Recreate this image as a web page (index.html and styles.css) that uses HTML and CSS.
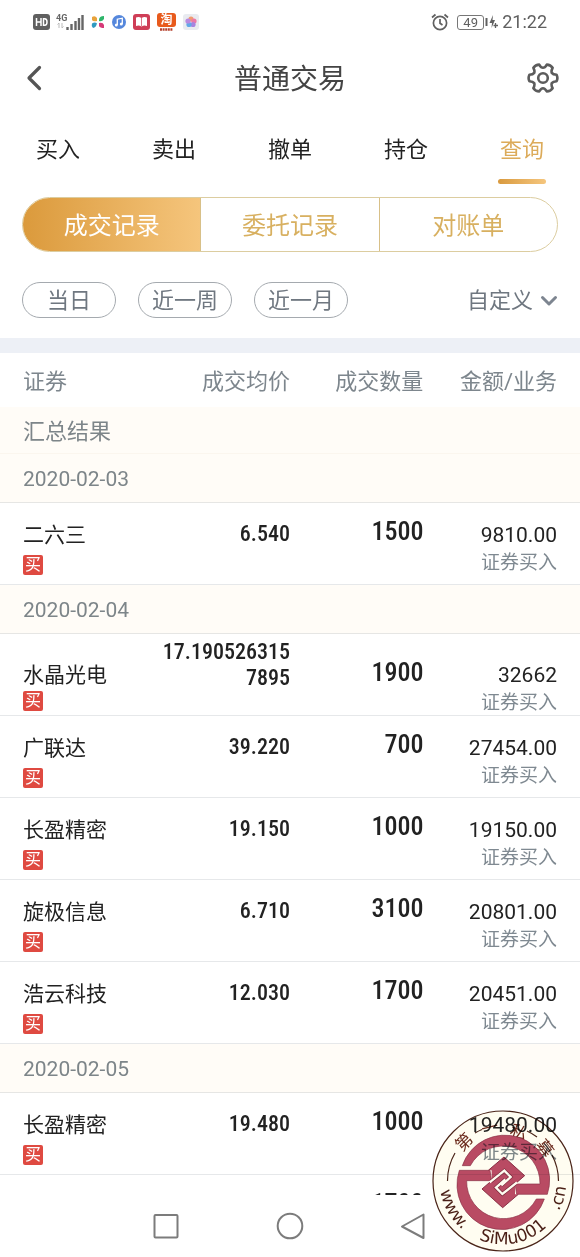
FILE: index.html
```html
<!DOCTYPE html>
<html lang="zh-CN">
<head>
<meta charset="utf-8">
<meta name="viewport" content="width=device-width, initial-scale=1">
<title>普通交易</title>
<link rel="stylesheet" href="styles.css">
</head>
<body>
<div class="app">
  <div class="status">
    <div class="status-left">
      <svg width="17" height="16" viewBox="0 0 17 16"><rect width="17" height="16" rx="3" fill="#606060"/><path d="M3.500 4v8M8 4v8M3.500 8H8M10.500 4.700v6.600h1.200q2.300 0 2.300-3.300t-2.300-3.300z" fill="none" stroke="#fff" stroke-width="1.500"/></svg>
      <svg width="28" height="18" viewBox="0 0 28 18"><text x="0" y="8" class="net">4G</text><path d="M3 10v5M1.500 11.500L3 10M6 10v5M7.500 13.500L6 15" stroke="#bbb" fill="none"/><path d="M11.500 17v-3M15.500 17v-6M19.500 17V8M23 17V5M26.500 17V2" stroke="#666" stroke-width="2.400"/></svg>
      <svg width="14" height="14" viewBox="0 0 14 14"><path d="M1 2q3-2 5 1v3q-4 1-5-1z" fill="#e8a33c"/><path d="M8 5q0-4 5-4v3q-2 3-5 2z" fill="#2db56a"/><path d="M1 8.500q3-2 5 0-1 4-4 4.500-2-2-1-4.500z" fill="#2f9ac0"/><path d="M8 8q4-1 5 2v3q-4 0-5-2z" fill="#d63a78"/></svg>
      <svg width="14" height="14" viewBox="0 0 14 14"><circle cx="7" cy="7" r="7" fill="#5587dc"/><path d="M5.300 10V4.200l5-1V9" fill="none" stroke="#fff" stroke-width="1.300"/><circle cx="4.300" cy="10" r="1.500" fill="#fff"/><circle cx="9.300" cy="9" r="1.500" fill="#fff"/></svg>
      <svg width="17" height="16" viewBox="0 0 17 16"><rect width="17" height="16" rx="3" fill="#cf3e57"/><path d="M3 3.500q3-1 5.500.5 2.500-1.500 5.500-.5v8.500q-3-1-5.500.5-2.500-1.500-5.500-.5z" fill="#fff"/><path d="M8.500 4v8" stroke="#cf3e57" stroke-width=".7"/></svg>
      <svg class="tao-icon" width="19" height="19" viewBox="0 0 19 19"><rect width="19" height="14" rx="3" fill="#e85a1c"/><text x="9.500" y="11" class="tao">淘</text><path d="M3 16.500h13" stroke="#b5402c" stroke-width="2.500" stroke-dasharray="2 .6"/></svg>
      <svg width="16" height="16" viewBox="0 0 16 16"><rect width="16" height="16" rx="3" fill="#e9ebf0"/><circle cx="8" cy="5" r="2.600" fill="#f09a70"/><circle cx="11" cy="7" r="2.600" fill="#ec78a8"/><circle cx="10" cy="10.500" r="2.600" fill="#a884e0"/><circle cx="6" cy="10.500" r="2.600" fill="#63a8e8"/><circle cx="5" cy="7" r="2.600" fill="#b88ae0"/></svg>
    </div>
    <div class="status-right">
      <svg width="18" height="18" viewBox="0 0 18 18" fill="none" stroke="#606060" stroke-width="1.700"><circle cx="9" cy="10" r="6.600"/><path d="M9 6v4.200l2.500 1.800M1 4.500L4.500 1.500M17 4.500L13.500 1.500"/></svg>
      <span class="battery">49</span>
      <svg width="13" height="16" viewBox="0 0 13 16"><path d="M1.500 4v8" stroke="#606060" stroke-width="2"/><path d="M8 1L4.500 9H7l-.5 5L10 6H7.500z" fill="#606060"/><path d="M10.500 9v5M8.500 11.500h4.500" stroke="#606060" stroke-width="1.300"/></svg>
      <span class="clock">21:22</span>
    </div>
  </div>

  <header class="titlebar">
    <button class="icon-btn" type="button" aria-label="返回"><svg width="18" height="28" viewBox="0 0 18 28"><path d="M14.500 3.500L4 14 14.500 24.500" fill="none" stroke="#555" stroke-width="3.200" stroke-linecap="round" stroke-linejoin="round"/></svg></button>
    <h1>普通交易</h1>
    <button class="icon-btn" type="button" aria-label="设置"><svg width="32" height="32" viewBox="0 0 32 32" fill="none" stroke="#5c5c5c" stroke-width="2.600" stroke-linejoin="round"><path d="M29.600 12.800Q31.200 16 29.600 19.200Q26 19.500 24.800 21.100Q24 23 25.600 26.200Q23.500 29.300 19.800 29.400Q18 26.200 16 26.200Q14 26.200 12.200 29.400Q8.500 29.300 6.400 26.200Q8 23 7.200 21.100Q6 19.500 2.400 19.200Q.8 16 2.400 12.800Q6 12.500 7.200 10.900Q8 9 6.400 5.800Q8.500 2.700 12.200 2.600Q14 5.800 16 5.800Q18 5.800 19.800 2.600Q23.500 2.700 25.600 5.800Q24 9 24.800 10.900Q26 12.500 29.600 12.800Z"/><circle cx="16" cy="16" r="4.800"/></svg></button>
  </header>

  <nav class="tabs">
    <a href="#buy">买入</a>
    <a href="#sell">卖出</a>
    <a href="#cancel">撤单</a>
    <a href="#hold">持仓</a>
    <a href="#query" class="active">查询</a>
  </nav>

  <div class="segments">
    <button type="button" class="active">成交记录</button>
    <button type="button">委托记录</button>
    <button type="button">对账单</button>
  </div>

  <div class="filters">
    <button type="button" class="pill">当日</button>
    <button type="button" class="pill">近一周</button>
    <button type="button" class="pill">近一月</button>
    <button type="button" class="custom">自定义<svg width="18" height="12" viewBox="0 0 18 12"><path d="M2.500 2.500L9 9l6.500-6.500" fill="none" stroke="#7d8590" stroke-width="3" stroke-linecap="round" stroke-linejoin="round"/></svg></button>
  </div>

  <main class="records">
    <table>
      <colgroup><col class="c-name"><col class="c-price"><col class="c-qty"><col class="c-amt"></colgroup>
      <thead><tr><th>证券</th><th>成交均价</th><th>成交数量</th><th>金额/业务</th></tr></thead>
      <tbody>
        <tr class="summary"><td colspan="4">汇总结果</td></tr>
        <tr class="date"><td colspan="4">2020-02-03</td></tr>
        <tr class="deal"><td>二六三<span class="badge">买</span></td><td>6.540</td><td>1500</td><td>9810.00<small>证券买入</small></td></tr>
        <tr class="date"><td colspan="4">2020-02-04</td></tr>
        <tr class="deal tall"><td>水晶光电<span class="badge">买</span></td><td>17.1905263157895</td><td>1900</td><td>32662<small>证券买入</small></td></tr>
        <tr class="deal"><td>广联达<span class="badge">买</span></td><td>39.220</td><td>700</td><td>27454.00<small>证券买入</small></td></tr>
        <tr class="deal"><td>长盈精密<span class="badge">买</span></td><td>19.150</td><td>1000</td><td>19150.00<small>证券买入</small></td></tr>
        <tr class="deal"><td>旋极信息<span class="badge">买</span></td><td>6.710</td><td>3100</td><td>20801.00<small>证券买入</small></td></tr>
        <tr class="deal"><td>浩云科技<span class="badge">买</span></td><td>12.030</td><td>1700</td><td>20451.00<small>证券买入</small></td></tr>
        <tr class="date"><td colspan="4">2020-02-05</td></tr>
        <tr class="deal"><td>长盈精密<span class="badge">买</span></td><td>19.480</td><td>1000</td><td>19480.00<small>证券买入</small></td></tr>
        <tr class="deal"><td></td><td></td><td>1700</td><td></td></tr>
      </tbody>
    </table>
  </main>

  <div class="navbar">
    <button class="icon-btn" type="button" aria-label="最近任务"><svg width="28" height="28" viewBox="0 0 28 28"><rect x="2.500" y="3" width="23" height="22.500" rx="1" fill="none" stroke="#7c7c7c" stroke-width="2"/></svg></button>
    <button class="icon-btn" type="button" aria-label="主页"><svg width="28" height="28" viewBox="0 0 28 28"><circle cx="14" cy="14" r="12.300" fill="none" stroke="#7c7c7c" stroke-width="2"/></svg></button>
    <button class="icon-btn" type="button" aria-label="后退"><svg width="28" height="28" viewBox="0 0 28 28"><path d="M23.500 2.500v23.500L2 14.500z" fill="none" stroke="#7c7c7c" stroke-width="2" stroke-linejoin="round"/></svg></button>
  </div>

  <svg class="seal" width="142" height="142" viewBox="0 0 142 142" role="img" aria-label="第一私募 www.SiMu001.cn">
    <defs><path id="ring-text" d="M7.700 71A63.300 63.300 0 0 0 134.300 71"/></defs>
    <circle cx="71" cy="71" r="70" fill="#fffdf1" stroke="#4a2418" stroke-width="1.200"/>
    <path d="M15.500 71A55.500 55.500 0 0 1 23 43M126.500 71A55.500 55.500 0 0 0 120 45M43 23A55.500 55.500 0 0 1 50 19.500M95 21A55.500 55.500 0 0 1 105 27" fill="none" stroke="#4a2418" stroke-width="1.200"/>
    <g class="seal-cn">
      <text transform="rotate(-45 71 71)" x="71" y="22">第</text>
      <text transform="rotate(-14 71 71)" x="71" y="22">一</text>
      <text transform="rotate(18 71 71)" x="71" y="26">私</text>
      <text transform="rotate(52 71 71)" x="71" y="24">募</text>
    </g>
    <g class="seal-url">
      <text><textPath href="#ring-text" startOffset="5%">www.</textPath></text>
      <text text-anchor="middle"><textPath href="#ring-text" startOffset="56%">SiMu001</textPath></text>
      <text text-anchor="end"><textPath href="#ring-text" startOffset="97%">.cn</textPath></text>
    </g>
    <g transform="translate(23 25) scale(.3333)">
      <g fill="#b94b63" stroke="#8a3045" stroke-width="2">
        <path d="M22 92A134 134 0 0 1 277 178H185L180 147H255A111 111 0 0 0 46 92Z"/>
        <path d="M22 92A134 134 0 0 1 277 178H185L180 147H255A111 111 0 0 0 46 92Z" transform="rotate(180 145 142)"/>
      </g>
      <path d="M147 66L209 122 180 147V178H190L143 218 81 162 110 137V106H100Z" fill="#b94b63"/>
      <path d="M100 106L147 66 209 122 180 147M190 178L143 218 81 162 110 137" fill="none" stroke="#8a3045" stroke-width="3"/>
      <g fill="none" stroke-linejoin="miter">
        <g stroke="#7d2b3c" stroke-width="11"><path d="M108 139L148 107 167 126 139 151"/><path d="M182 145L142 177 123 158 151 133"/></g>
        <g stroke="#fffdf1" stroke-width="7"><path d="M104 142L148 107 167 126 139 151"/><path d="M186 142L142 177 123 158 151 133"/></g>
      </g>
    </g>
  </svg>
</div>
</body>
</html>
```
FILE: styles.css
```css
* { box-sizing: border-box; }

body {
  margin: 0;
  background: #fff;
  color: #222;
  font-family: Roboto, "Noto Sans CJK SC", sans-serif;
}

button {
  padding: 0;
  border: 0;
  background: none;
  color: inherit;
  font: inherit;
}

svg { display: block; }

.app {
  position: relative;
  display: flex;
  flex-direction: column;
  height: 100vh;
  overflow: hidden;
}

.app > * { flex: none; }

.status {
  display: flex;
  justify-content: space-between;
  align-items: center;
  height: 44px;
  padding: 0 33px;
}

.status-left { display: flex; align-items: center; gap: 6px; }
.status-left svg + svg + svg { margin-left: 1px; }
.status-right { display: flex; align-items: center; gap: 4px; color: #606060; }

.net { font: 700 9px Roboto, sans-serif; fill: #666; }
.tao-icon { overflow: visible; }
.tao { font: 700 12px "Noto Sans CJK SC", sans-serif; fill: #fff; text-anchor: middle; }

.battery {
  width: 27px;
  margin-left: 4px;
  border: 1px solid #777;
  border-radius: 3px;
  font-size: 13px;
  line-height: 13px;
  text-align: center;
}

.battery + svg { margin-left: -3px; }
.clock { font-size: 18px; line-height: 24px; }

.titlebar {
  display: flex;
  justify-content: space-between;
  align-items: center;
  height: 68px;
  padding: 0 21px 0 25px;
}

.titlebar h1 {
  margin: 0;
  padding-top: 4px;
  color: #444;
  font-size: 28px;
  font-weight: 400;
  line-height: 40px;
}

.icon-btn { min-width: 28px; }

.tabs { display: flex; height: 85px; }

.tabs a {
  position: relative;
  flex: 1;
  padding-top: 22px;
  color: #222;
  font-size: 22px;
  line-height: 32px;
  text-align: center;
  text-decoration: none;
}

.tabs .active { color: #dcab5a; }

.tabs .active::after {
  content: "";
  position: absolute;
  top: 67px;
  left: 50%;
  width: 48px;
  height: 5px;
  margin-left: -24px;
  border-radius: 3px;
  background: linear-gradient(90deg, #d99a3f, #f5c67e);
}

.segments {
  display: flex;
  height: 55px;
  margin: 0 22px;
  border: 1px solid #dccda0;
  border-radius: 28px;
  overflow: hidden;
}

.segments button {
  flex: 1;
  padding-top: 2px;
  color: #d8b060;
  font-size: 24px;
  line-height: 32px;
}

.segments button + button { border-left: 1px solid #d8c088; }

.segments .active {
  background: linear-gradient(90deg, #db9a3c, #f5c57c);
  color: #fff;
}

.filters {
  display: flex;
  gap: 22px;
  padding: 30px 22px 20px;
  border-bottom: 15px solid #edf0f6;
  color: #6f7780;
  font-size: 22px;
  line-height: 32px;
}

.pill {
  width: 94px;
  height: 36px;
  padding-top: 2px;
  border: 1px solid #a5aaaf;
  border-radius: 18px;
}

.custom {
  display: flex;
  align-items: center;
  gap: 7px;
  margin-left: auto;
  padding-top: 2px;
}

.app > .records {
  flex: 1 1 0;
  min-height: 0;
  overflow: hidden;
}

table {
  width: 100%;
  table-layout: fixed;
  border-collapse: separate;
  border-spacing: 0;
}

.c-name { width: 28%; }
.c-price { width: 22%; }
.c-qty { width: 23%; }
.c-amt { width: 27%; }

th, td {
  padding: 0;
  font-weight: 400;
  text-align: right;
  vertical-align: top;
}

th:first-child, td:first-child { padding-left: 23px; text-align: left; }
th:last-child, .deal td:last-child { padding-right: 23px; }

th {
  height: 54px;
  padding-top: 13px;
  color: #7d868d;
  font-size: 22px;
  line-height: 32px;
}

.summary td, .date td {
  background: #fffcf7;
  color: #7d8589;
}

.summary td { height: 47px; padding-top: 9px; border-bottom: 1px solid #fbf6ee; font-size: 22px; line-height: 32px; }
.date td { height: 49px; padding-top: 13px; border-bottom: 1px solid #e6e6e4; font-size: 21px; line-height: 24px; }

.deal td {
  height: 82px;
  padding-top: 20px;
  border-bottom: 1px solid #e6e8ea;
  font-size: 21px;
  line-height: 24px;
}

.deal td:nth-child(2) {
  padding-top: 18px;
  font-family: "Roboto Condensed", "Open Sans Condensed", "Noto Sans Condensed", Roboto, sans-serif;
  font-size: 22px;
  font-weight: 500;
  line-height: 26px;
  overflow-wrap: anywhere;
}

.deal td:nth-child(3) {
  padding-top: 16px;
  font-family: "Roboto Condensed", "Open Sans Condensed", "Noto Sans Condensed", Roboto, sans-serif;
  font-size: 26px;
  font-weight: 500;
}

.deal.tall td { padding-top: 29px; }
.deal.tall td:nth-child(2) { padding-top: 5px; }
.deal.tall td:nth-child(3) { padding-top: 26px; }

.badge {
  display: block;
  width: 20px;
  height: 20px;
  margin-top: 8px;
  border-radius: 2px;
  background: #df4a41;
  color: #fff;
  font-size: 16px;
  line-height: 20px;
  text-align: center;
}

.tall .badge { margin-top: 4px; }

small {
  display: block;
  margin-top: 4px;
  color: #7f8991;
  font-size: 19px;
}

.navbar {
  display: flex;
  justify-content: center;
  align-items: center;
  gap: 96px;
  height: 62px;
  background: #fff;
}

.seal {
  position: absolute;
  right: 6px;
  bottom: 5px;
  mix-blend-mode: multiply;
}

.seal-cn { font: 17px "Noto Sans CJK SC", sans-serif; fill: #6b2a1c; text-anchor: middle; }
.seal-url { font: 17px "DejaVu Sans", sans-serif; fill: #4a1f16; }
```
